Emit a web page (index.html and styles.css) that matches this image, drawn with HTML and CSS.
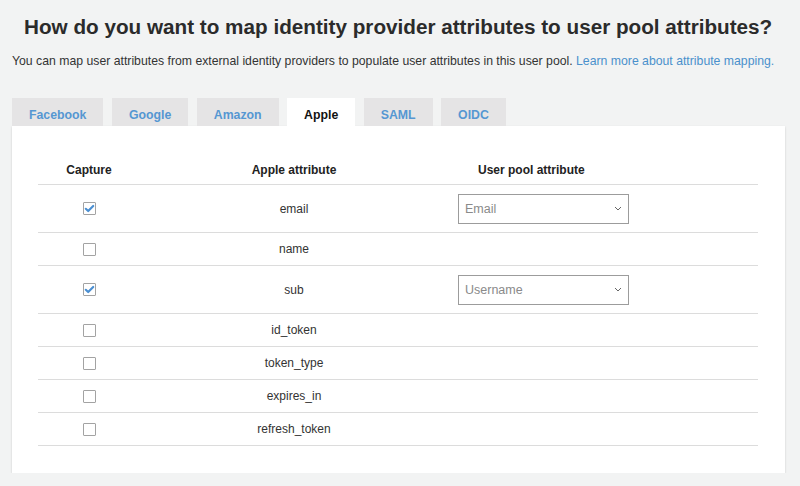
FILE: index.html
```html
<!DOCTYPE html>
<html lang="en">
<head>
<meta charset="utf-8">
<title>Attribute mapping</title>
<link rel="stylesheet" href="styles.css">
</head>
<body>
<div class="page">
  <h1 class="title">How do you want to map identity provider attributes to user pool attributes?</h1>
  <p class="intro">You can map user attributes from external identity providers to populate user attributes in this user pool. <a class="link" href="#">Learn more about attribute mapping.</a></p>

  <div class="tabs">
    <div class="tab">Facebook</div>
    <div class="tab">Google</div>
    <div class="tab">Amazon</div>
    <div class="tab active">Apple</div>
    <div class="tab">SAML</div>
    <div class="tab">OIDC</div>
  </div>

  <div class="panel">
    <div class="grid">
      <div class="row head">
        <div class="cell c1">Capture</div>
        <div class="cell c2">Apple attribute</div>
        <div class="cell c3 h3">User pool attribute</div>
      </div>

      <div class="row tall">
        <div class="cell c1"><span class="cb checked"><svg viewBox="0 0 13 13" width="13" height="13"><path d="M2.8 6.8 L5.2 9 L10.2 4" fill="none" stroke="#4a8fd2" stroke-width="2.2" stroke-linecap="round" stroke-linejoin="round"/></svg></span></div>
        <div class="cell c2">email</div>
        <div class="cell c3"><div class="select"><span>Email</span><svg class="chev" viewBox="0 0 8 5" width="8" height="5"><path d="M1 1 L4 4 L7 1" fill="none" stroke="#666" stroke-width="1"/></svg></div></div>
      </div>

      <div class="row">
        <div class="cell c1"><span class="cb"></span></div>
        <div class="cell c2">name</div>
        <div class="cell c3"></div>
      </div>

      <div class="row tall">
        <div class="cell c1"><span class="cb checked"><svg viewBox="0 0 13 13" width="13" height="13"><path d="M2.8 6.8 L5.2 9 L10.2 4" fill="none" stroke="#4a8fd2" stroke-width="2.2" stroke-linecap="round" stroke-linejoin="round"/></svg></span></div>
        <div class="cell c2">sub</div>
        <div class="cell c3"><div class="select"><span>Username</span><svg class="chev" viewBox="0 0 8 5" width="8" height="5"><path d="M1 1 L4 4 L7 1" fill="none" stroke="#666" stroke-width="1"/></svg></div></div>
      </div>

      <div class="row">
        <div class="cell c1"><span class="cb"></span></div>
        <div class="cell c2">id_token</div>
        <div class="cell c3"></div>
      </div>

      <div class="row">
        <div class="cell c1"><span class="cb"></span></div>
        <div class="cell c2">token_type</div>
        <div class="cell c3"></div>
      </div>

      <div class="row">
        <div class="cell c1"><span class="cb"></span></div>
        <div class="cell c2">expires_in</div>
        <div class="cell c3"></div>
      </div>

      <div class="row">
        <div class="cell c1"><span class="cb"></span></div>
        <div class="cell c2">refresh_token</div>
        <div class="cell c3"></div>
      </div>
    </div>
  </div>
</div>
</body>
</html>
```

FILE: styles.css
```css
html, body {
  margin: 0;
  padding: 0;
  background: #f2f3f3;
}
body {
  font-family: "Liberation Sans", Arial, Helvetica, sans-serif;
  color: #333;
}
.page {
  padding: 15px 15px 0 12px;
}
.title {
  margin: 0 0 0 12px;
  font-size: 20.7px;
  line-height: 24px;
  font-weight: bold;
  color: #2b2b2b;
  white-space: nowrap;
}
.intro {
  margin: 14px 0 0 0;
  font-size: 12.25px;
  line-height: 16px;
  color: #333;
  white-space: nowrap;
}
.link {
  color: #4a90cc;
  text-decoration: none;
}
.tabs {
  display: flex;
  gap: 8.5px;
  margin-top: 29px;
}
.tab {
  height: 28px;
  box-sizing: border-box;
  padding: 9px 17px 3px;
  line-height: 16px;
  font-size: 12.3px;
  font-weight: bold;
  color: #5597d2;
  background: #e5e4e5;
}
.tab.active {
  background: #fff;
  color: #111;
}
.panel {
  background: #fff;
  box-shadow: 0 1px 2px rgba(0, 0, 0, 0.16);
  padding: 27px 27px 27px 26px;
}
.row {
  display: grid;
  grid-template-columns: 102px 308px 1fr;
  height: 33px;
  box-sizing: border-box;
  border-bottom: 1px solid #dcdcdc;
  font-size: 12px;
}
.row.tall {
  height: 48px;
}
.row.head {
  height: 32px;
  font-weight: bold;
  color: #222;
  align-items: start;
}
.row.head .cell {
  padding-top: 10px;
}
.cell {
  display: flex;
  align-items: center;
}
.c1, .c2 {
  justify-content: center;
}
.c3 {
  padding-left: 10px;
}
.h3 {
  padding-left: 30px;
}
.cb {
  width: 13px;
  height: 13px;
  box-sizing: border-box;
  border: 1px solid #a3a3a3;
  border-radius: 1px;
  background: #fff;
  display: inline-flex;
  align-items: center;
  justify-content: center;
  overflow: hidden;
}
.cb svg {
  flex: none;
}
.select {
  width: 171px;
  height: 30px;
  box-sizing: border-box;
  border: 1px solid #9c9c9c;
  display: flex;
  align-items: center;
  justify-content: space-between;
  padding: 0 6px 0 6px;
  color: #8a8a8a;
  font-size: 12.5px;
  font-weight: 300;
  background: #fff;
}
.chev {
  flex: none;
}
```
